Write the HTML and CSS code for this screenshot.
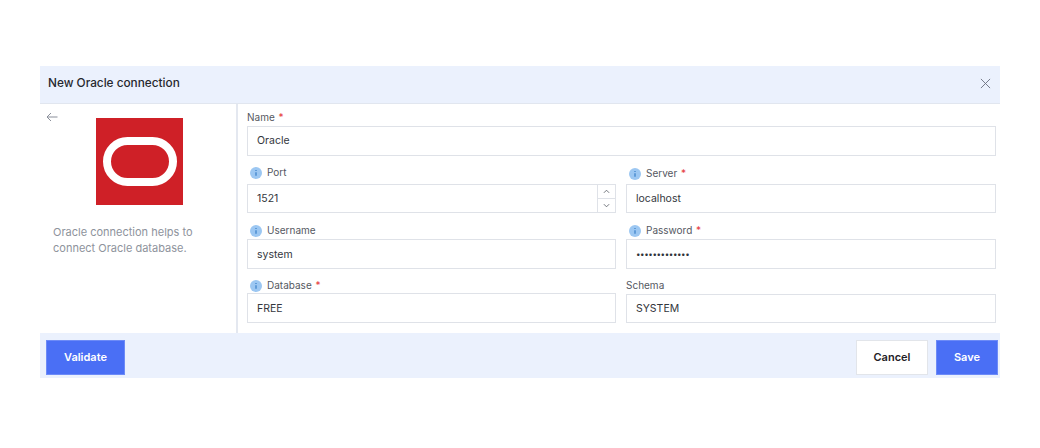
FILE: index.html
```html
<!DOCTYPE html>
<html lang="en">
<head>
<meta charset="utf-8">
<title>New Oracle connection</title>
<link rel="stylesheet" href="styles.css">
</head>
<body>
<main class="dialog">
  <header class="head">
    <h1>New Oracle connection</h1>
    <svg class="close" viewBox="0 0 12 12" aria-label="Close"><path d="M1 1l10 10M11 1L1 11"/></svg>
  </header>
  <div class="body">
    <aside class="side">
      <svg class="back" viewBox="0 0 12 10" aria-label="Back"><path d="M11.5 5H1M5 1L1 5l4 4"/></svg>
      <div class="logo"><span class="ring"></span></div>
      <p class="desc">Oracle connection helps to connect Oracle database.</p>
    </aside>
    <form class="form">
      <div class="field wide">
        <label>Name <b>*</b></label>
        <div class="input">Oracle</div>
      </div>
      <div class="field short">
        <label class="higher"><svg class="info" viewBox="0 0 12 12"><circle cx="6" cy="6" r="6"/><path d="M6 5.2v3.6M6 3v1.1"/></svg>Port</label>
        <div class="input num">1521
          <span class="spin">
            <span class="step"><svg viewBox="0 0 8 5"><path d="M1 4l3-3 3 3"/></svg></span>
            <span class="step"><svg viewBox="0 0 8 5"><path d="M1 1l3 3 3-3"/></svg></span>
          </span>
        </div>
      </div>
      <div class="field short">
        <label><svg class="info" viewBox="0 0 12 12"><circle cx="6" cy="6" r="6"/><path d="M6 5.2v3.6M6 3v1.1"/></svg>Server <b>*</b></label>
        <div class="input">localhost</div>
      </div>
      <div class="field">
        <label><svg class="info" viewBox="0 0 12 12"><circle cx="6" cy="6" r="6"/><path d="M6 5.2v3.6M6 3v1.1"/></svg>Username</label>
        <div class="input">system</div>
      </div>
      <div class="field">
        <label><svg class="info" viewBox="0 0 12 12"><circle cx="6" cy="6" r="6"/><path d="M6 5.2v3.6M6 3v1.1"/></svg>Password <b>*</b></label>
        <div class="input dots">•••••••••••••</div>
      </div>
      <div class="field close-label">
        <label><svg class="info" viewBox="0 0 12 12"><circle cx="6" cy="6" r="6"/><path d="M6 5.2v3.6M6 3v1.1"/></svg>Database <b>*</b></label>
        <div class="input">FREE</div>
      </div>
      <div class="field short">
        <label class="near">Schema</label>
        <div class="input">SYSTEM</div>
      </div>
    </form>
  </div>
  <footer class="foot">
    <button type="button" class="btn primary">Validate</button>
    <span class="actions">
      <button type="button" class="btn plain">Cancel</button>
      <button type="button" class="btn primary save">Save</button>
    </span>
  </footer>
</main>
</body>
</html>
```
FILE: styles.css
```css
* { box-sizing: border-box; }
html, body { margin: 0; background: #fff; }
body {
  width: 1040px;
  height: 448px;
  padding: 66px 40px 0;
  font-family: "Inter", "Liberation Sans", sans-serif;
  color: #3c3f46;
}
.dialog { width: 960px; height: 312px; display: flex; flex-direction: column; }
.head {
  height: 38px;
  flex: none;
  background: #ebf1fd;
  border-bottom: 1px solid #e1e6ef;
  padding: 0 9px 4px 8px;
  display: flex;
  align-items: center;
  justify-content: space-between;
}
h1 { margin: 0; font-size: 11.8px; font-weight: 500; color: #26282d; }
.close { width: 11px; height: 11px; margin-top: 2px; fill: none; stroke: #6c7280; stroke-width: 1; }
.body { height: 229px; flex: none; display: flex; }
.side {
  width: 198px;
  flex: none;
  border-right: 2px solid #e4e8f0;
  padding: 14px 0 0 13px;
  position: relative;
}
.back {
  position: absolute; left: 6px; top: 8px;
  width: 12px; height: 10px;
  fill: none; stroke: #8a8f9a; stroke-width: 1;
}
.logo {
  width: 87px; height: 87px;
  margin-left: 43px;
  background: #cf2027;
  display: flex; align-items: center; justify-content: center;
}
.ring {
  width: 74px; height: 49px;
  border: 8px solid #fff;
  border-radius: 25px;
}
.desc {
  margin: 19px 0 0;
  width: 165px;
  font-size: 11px;
  line-height: 16px;
  color: #8e939c;
}
.form {
  flex: 1;
  padding: 0 4px 0 9px;
  display: grid;
  grid-template-columns: 369px 370px;
  grid-template-rows: 52px 57px 56px 54px;
  column-gap: 10px;
  align-items: end;
}
.wide { grid-column: 1 / -1; }
.field label {
  display: flex;
  align-items: center;
  height: 14px;
  margin-bottom: 2px;
  font-size: 10px;
  color: #55585f;
  white-space: pre;
}
.short label { margin-bottom: 4px; }
.field label.higher { margin-bottom: 5px; }
.field label.near { margin-bottom: 2px; }
.close-label label { margin-bottom: 1px; }
.short .input { height: 29px; }
.wide .input { padding-bottom: 2px; }
.field b { font-weight: 400; color: #e5383b; margin-left: 1px; }
.info {
  width: 12px; height: 12px;
  margin: 1px 5px 0 3px;
  flex: none;
}
.info circle { fill: #9cc7f2; }
.info path { stroke: #2f78c4; stroke-width: 1.1; fill: none; }
.input {
  height: 30px;
  border: 1.5px solid #dfe2e8;
  background: #fff;
  padding: 0 9px;
  display: flex;
  align-items: center;
  font-size: 10.5px;
  color: #33363c;
}
.num { justify-content: space-between; padding-right: 0; }
.input.dots { font-size: 8px; letter-spacing: -.4px; color: #30333a; }
.spin {
  width: 18px;
  align-self: stretch;
  border-left: 1px solid #dfe2e8;
  display: flex; flex-direction: column;
}
.step { flex: 1; display: flex; align-items: center; justify-content: center; }
.step + .step { border-top: 1px solid #dfe2e8; }
.step svg { width: 7px; height: 5px; fill: none; stroke: #5f636c; stroke-width: 1; }
.foot {
  height: 45px;
  flex: none;
  background: #ebf1fd;
  padding: 7px 2px 3px 6px;
  display: flex;
  justify-content: space-between;
}
.actions { display: flex; gap: 8px; }
.btn {
  height: 35px;
  font: 600 11px "Inter", "Liberation Sans", sans-serif;
  border: 0;
  padding: 0 0 2px;
}
.primary { width: 79px; background: #4a6ff5; color: #fff; border: 1px solid #6d8bf7; }
.primary.save { width: 62px; }
.plain { width: 72px; background: #fff; color: #1f2126; border: 1.5px solid #e2e5ea; }
```
